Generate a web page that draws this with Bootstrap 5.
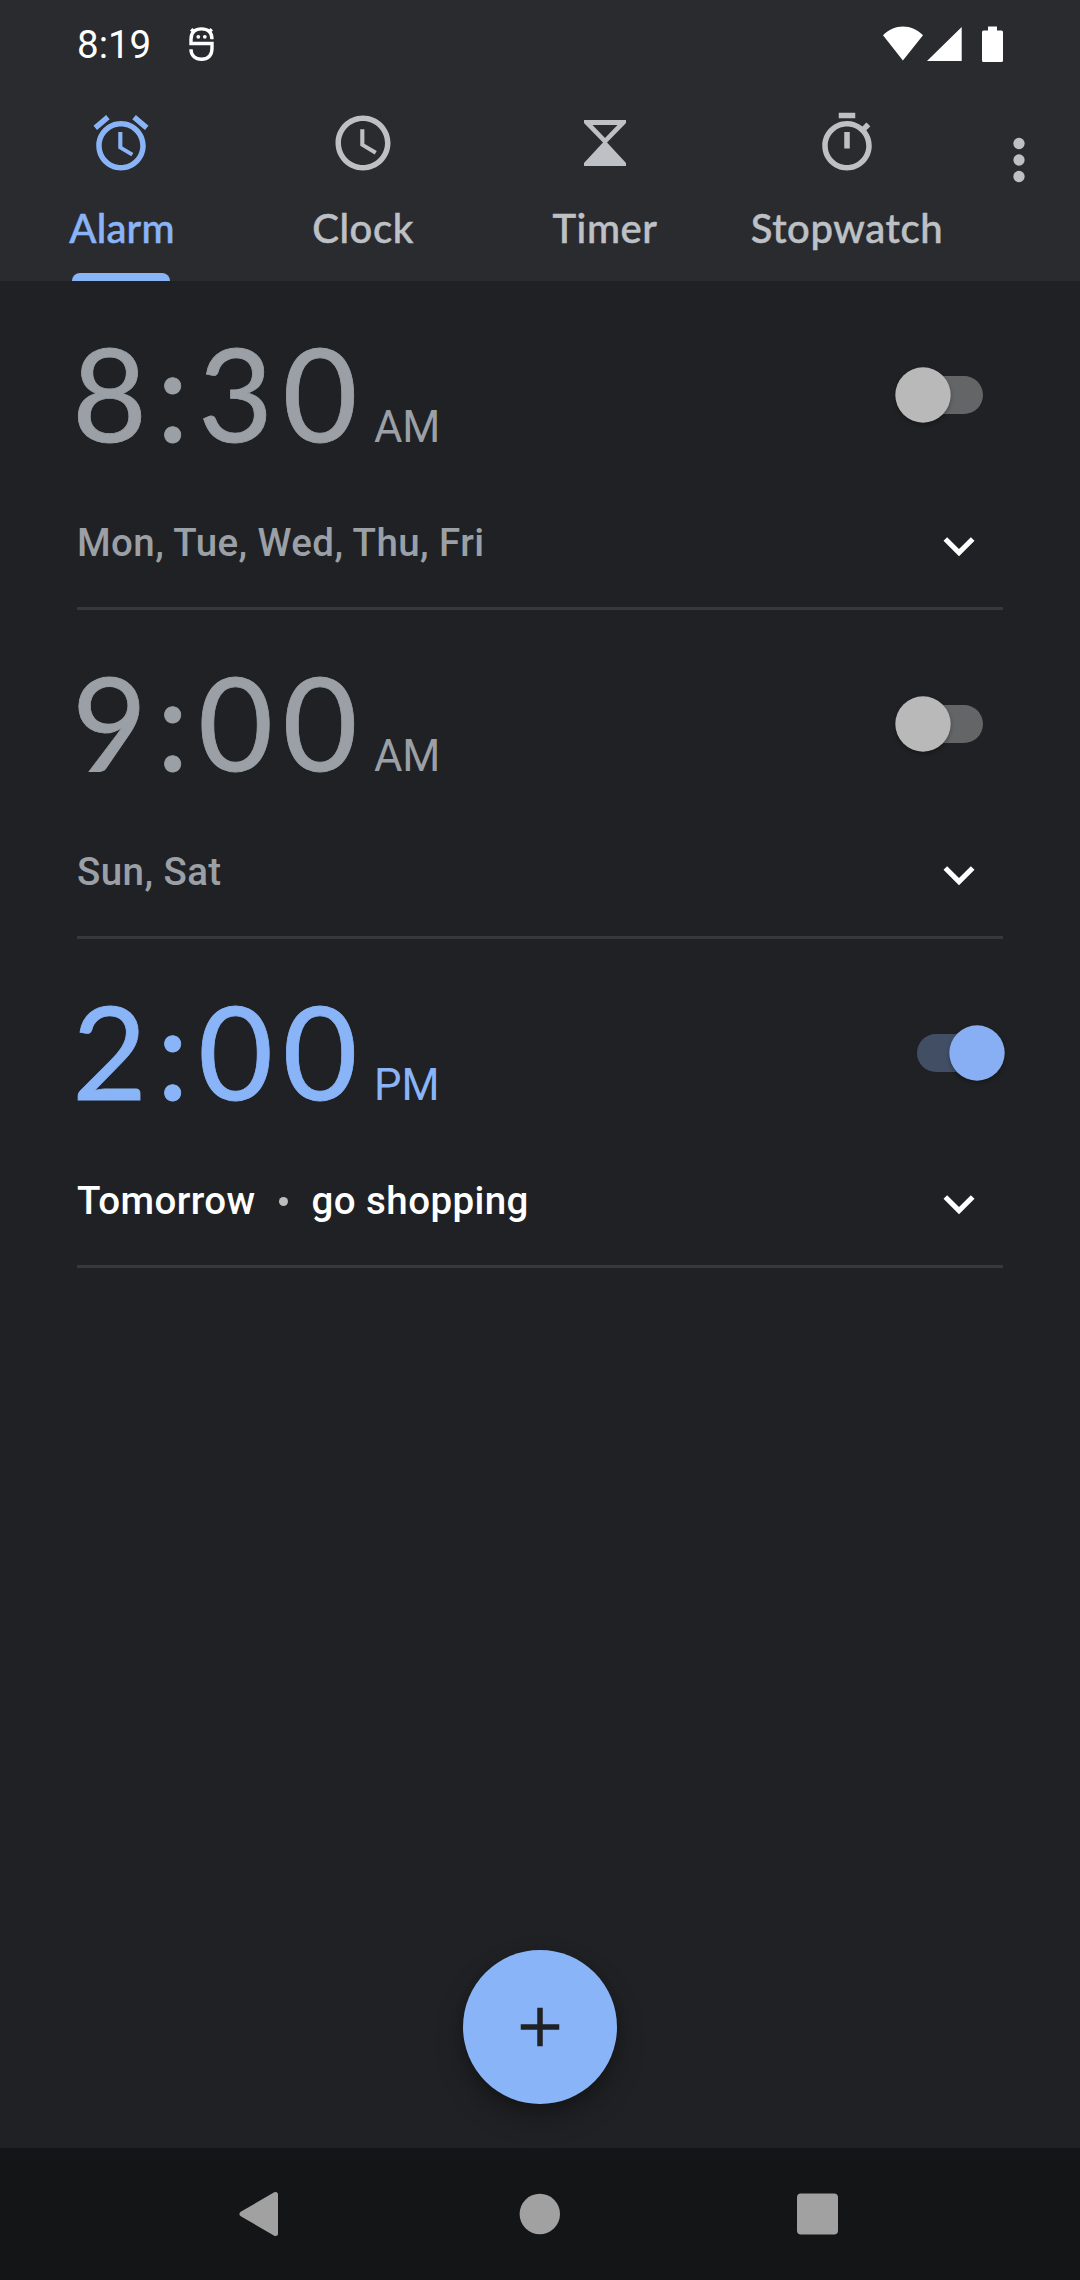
<!DOCTYPE html>
<html lang="en">
<head>
<meta charset="utf-8">
<meta name="viewport" content="width=device-width, initial-scale=1">
<title>Clock</title>
<link href="https://cdn.jsdelivr.net/npm/bootstrap@5.3.0/dist/css/bootstrap.min.css" rel="stylesheet">
<style>
  body { background: #202124; font-family: Roboto, sans-serif; font-size: 38.5px; line-height: 1; color: #fff; }
  svg { display: block; flex: none; }
  .screen { width: 1080px; height: 2280px; }
  .top-area { background: #2a2b2e; height: 281px; }
  .status { height: 88px; padding: 0 77px; }
  .status-time { padding-top: 2px; }
  .notice-icon { margin-left: 38px; }
  .tabs-row { height: 193px; }
  .tab-item { width: 242px; padding-top: 22px; color: #bdc1c6; font: 500 40px/46px Lato, sans-serif; letter-spacing: .6px; }
  .tab-item.active { color: #8ab4f8; }
  .tab-item.active .tab-label { letter-spacing: .2px; padding-left: 2px; }
  .tab-label { margin-top: 29px; white-space: nowrap; -webkit-text-stroke: .5px currentColor; }
  .tab-line { width: 98px; height: 8px; border-radius: 8px 8px 0 0; background: #8ab4f8; }
  .more-box { width: 102px; padding-top: 39px; color: #bdc1c6; }
  .alarm { height: 329px; margin: 0 77px; border-bottom: 3px solid #37383c; color: #9aa0a6; }
  .alarm.on { color: #fff; }
  .time-row { height: 228px; }
  .clock-time { font: 400 129.5px/222px Lato, sans-serif; letter-spacing: 9.3px; margin: 0 7px 0 -5px; -webkit-text-stroke: .8px currentColor; }
  .half { font-size: 43.6px; }
  .on .time-text { color: #8ab4f8; }
  .toggle { margin: 84px -4px 0 0; }
  .info-row { height: 98px; font-weight: 500; letter-spacing: .42px; }
  .info-text { padding-top: 11px; line-height: 46px; height: 57px; }
  .chevron { margin: 6px 13px 0 0; }
  .sep-dot { width: 9px; height: 9px; background: #bdbdbd; margin: 0 23.5px; }
  .fab { width: 154px; height: 154px; background: #8ab4f8; box-shadow: 0 14px 28px rgba(0,0,0,.26), 0 3px 10px rgba(0,0,0,.16); margin-bottom: 44px; }
  .nav-area { height: 132px; background: #141517; color: #a1a1a1; padding: 0 241px 0 239px; }
  .knob { filter: drop-shadow(0 2px 2px rgba(0,0,0,.3)); }
</style>
<script src="https://cdn.jsdelivr.net/npm/bootstrap@5.3.0/dist/js/bootstrap.bundle.min.js"></script>
</head>
<body>
<div class="screen d-flex flex-column overflow-hidden">
  <header class="top-area">
    <div class="status d-flex align-items-center">
      <span class="status-time">8:19</span>
      <svg class="notice-icon" width="26" height="36" viewBox="0 0 26 36" fill="none" stroke="#fff" stroke-width="3.4"><path d="M23 13.200C23 6 18.500 2.900 12.500 2.900S2 6 2 13.200V17.500H23V22.500C23 30 18.500 33.200 12.500 33.200S2 30 2 23.200M5 6L2.200 3.200M20 6L22.800 3.200"/><g fill="#fff" stroke="none"><circle cx="9.300" cy="10.800" r="1.900"/><circle cx="15.800" cy="10.800" r="1.900"/></g></svg>
      <svg class="ms-auto" width="121" height="36" viewBox="0 0 121 36" fill="#fff"><path d="M1 9.300C12-2.300 30-2.300 41 9.300L20.900 34.500zM45 35L79.700 1V35zM106 0.500h9v4h4.500a1.500 1.500 0 0 1 1.500 1.500V34.500a1.500 1.500 0 0 1-1.500 1.500h-18a1.500 1.500 0 0 1-1.500-1.500V6a1.500 1.500 0 0 1 1.500-1.500h4.500z"/></svg>
    </div>
    <nav class="tabs-row d-flex">
      <div class="tab-item active d-flex flex-column align-items-center">
        <svg width="66" height="66" viewBox="0 0 24 24" fill="currentColor"><path d="M22 5.720l-4.600-3.860-1.290 1.530 4.600 3.860L22 5.720zM7.880 3.390L6.600 1.860 2 5.710l1.290 1.530 4.590-3.850zM12.500 8H11v6l4.750 2.850.750-1.230-4-2.370V8zM12 4c-4.970 0-9 4.030-9 9s4.020 9 9 9c4.970 0 9-4.030 9-9s-4.030-9-9-9zm0 16c-3.870 0-7-3.130-7-7s3.130-7 7-7 7 3.130 7 7-3.130 7-7 7z"/></svg>
        <span class="tab-label">Alarm</span>
        <div class="tab-line mt-auto"></div>
      </div>
      <div class="tab-item d-flex flex-column align-items-center">
        <svg width="66" height="66" viewBox="0 0 24 24" fill="currentColor"><path d="M11.990 2C6.470 2 2 6.480 2 12s4.470 10 9.990 10C17.520 22 22 17.520 22 12S17.520 2 11.990 2zM12 20c-4.420 0-8-3.580-8-8s3.580-8 8-8 8 3.580 8 8-3.580 8-8 8zm.500-13H11v6l5.250 3.150.750-1.230-4.500-2.670z"/></svg>
        <span class="tab-label">Clock</span>
      </div>
      <div class="tab-item d-flex flex-column align-items-center">
        <svg width="66" height="66" viewBox="0 0 66 66" fill="currentColor" fill-rule="evenodd"><path d="M12 10H54V13L35 32.500L54 53V56H12V53L31 32.500L12 13zM20.500 15L33 28L45.500 15z"/></svg>
        <span class="tab-label">Timer</span>
      </div>
      <div class="tab-item d-flex flex-column align-items-center">
        <svg width="66" height="66" viewBox="0 0 24 24" fill="currentColor"><path d="M15 1H9v2h6V1zm-4 13h2V8h-2v6zm8.030-6.610l1.420-1.420c-.430-.510-.900-.990-1.410-1.410l-1.420 1.420C16.070 4.740 14.120 4 12 4c-4.970 0-9 4.030-9 9s4.020 9 9 9 9-4.030 9-9c0-2.120-.740-4.070-1.970-5.610zM12 20c-3.870 0-7-3.130-7-7s3.130-7 7-7 7 3.130 7 7-3.130 7-7 7z"/></svg>
        <span class="tab-label">Stopwatch</span>
      </div>
      <div class="more-box d-flex justify-content-center">
        <svg width="66" height="66" viewBox="0 0 24 24" fill="currentColor"><circle cx="12" cy="6" r="2.050"/><circle cx="12" cy="12" r="2.050"/><circle cx="12" cy="18" r="2.050"/></svg>
      </div>
    </nav>
  </header>

  <main class="flex-grow-1 d-flex flex-column">
    <section class="alarm">
      <div class="time-row d-flex justify-content-between">
        <div class="time-text d-flex align-items-baseline"><span class="clock-time">8:30</span><span class="half">AM</span></div>
        <svg class="toggle" width="114" height="64" viewBox="0 0 114 64"><rect x="8" y="11" width="82" height="38" rx="19" fill="#646566"/><circle class="knob" cx="30" cy="30" r="27.700" fill="#b9b9b9"/></svg>
      </div>
      <div class="info-row d-flex justify-content-between">
        <div class="info-text">Mon, Tue, Wed, Thu, Fri</div>
        <svg class="chevron" width="62" height="62" viewBox="0 0 24 24" fill="#fff"><path d="M16.590 8.590L12 13.170 7.410 8.590 6 10l6 6 6-6z"/></svg>
      </div>
    </section>
    <section class="alarm">
      <div class="time-row d-flex justify-content-between">
        <div class="time-text d-flex align-items-baseline"><span class="clock-time">9:00</span><span class="half">AM</span></div>
        <svg class="toggle" width="114" height="64" viewBox="0 0 114 64"><rect x="8" y="11" width="82" height="38" rx="19" fill="#646566"/><circle class="knob" cx="30" cy="30" r="27.700" fill="#b9b9b9"/></svg>
      </div>
      <div class="info-row d-flex justify-content-between">
        <div class="info-text">Sun, Sat</div>
        <svg class="chevron" width="62" height="62" viewBox="0 0 24 24" fill="#fff"><path d="M16.590 8.590L12 13.170 7.410 8.590 6 10l6 6 6-6z"/></svg>
      </div>
    </section>
    <section class="alarm on">
      <div class="time-row d-flex justify-content-between">
        <div class="time-text d-flex align-items-baseline"><span class="clock-time">2:00</span><span class="half">PM</span></div>
        <svg class="toggle" width="114" height="64" viewBox="0 0 114 64"><rect x="24" y="11" width="80" height="38" rx="19" fill="#424e64"/><circle class="knob" cx="84" cy="30" r="27.700" fill="#88aff4"/></svg>
      </div>
      <div class="info-row d-flex justify-content-between">
        <div class="info-text d-flex align-items-center"><span>Tomorrow</span><span class="sep-dot rounded-circle"></span><span>go shopping</span></div>
        <svg class="chevron" width="62" height="62" viewBox="0 0 24 24" fill="#fff"><path d="M16.590 8.590L12 13.170 7.410 8.590 6 10l6 6 6-6z"/></svg>
      </div>
    </section>
    <button class="fab btn rounded-circle border-0 p-0 mt-auto mx-auto d-flex align-items-center justify-content-center" aria-label="Add alarm">
      <svg width="66" height="66" viewBox="0 0 24 24" fill="#202124"><path d="M19 13h-6v6h-2v-6H5v-2h6V5h2v6h6z"/></svg>
    </button>
  </main>

  <footer class="nav-area d-flex align-items-center justify-content-between">
    <svg width="42" height="48" viewBox="0 0 42 48" fill="currentColor" stroke="currentColor" stroke-width="5" stroke-linejoin="round"><path d="M36.500 4.500V43.500L3 24z"/></svg>
    <svg width="42" height="42" viewBox="0 0 42 42" fill="currentColor"><circle cx="21.800" cy="21" r="20.200"/></svg>
    <svg width="42" height="42" viewBox="0 0 42 42" fill="currentColor"><rect x="0" y="0.500" width="41" height="41" rx="4"/></svg>
  </footer>
</div>
</body>
</html>
